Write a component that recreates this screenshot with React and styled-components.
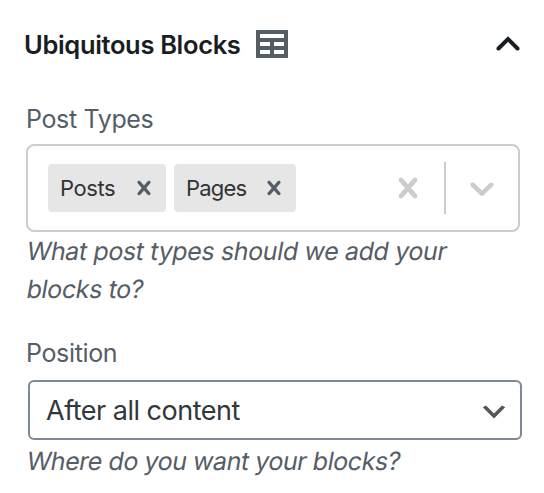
import React from "react";
import styled, { createGlobalStyle } from "styled-components";

const GlobalStyle = createGlobalStyle`
  * { box-sizing: border-box; }
  body {
    margin: 0;
    background: #fff;
    font-family: Inter, "Liberation Sans", sans-serif;
  }
`;

const Panel = styled.section`
  width: 544px;
  height: 493px;
  padding: 26px 22px 0 26px;
  overflow: hidden;
  background: #fff;
`;

const PanelHeader = styled.header`
  display: flex;
  align-items: center;
  height: 36px;
  margin-bottom: 37px;
`;

const Title = styled.h2`
  width: 232px;
  margin: 1px 0 0 -2px;
  color: #191e23;
  font-size: 25.5px;
  font-weight: 600;
  line-height: 36px;
  letter-spacing: -0.34px;
  white-space: nowrap;
`;

const ToggleIcon = styled.svg`
  margin-left: auto;
`;

const Field = styled.div`
  display: flex;
  flex-direction: column;
  margin-bottom: ${(p) => p.$gap || 0}px;
`;

const Label = styled.label`
  height: 40px;
  margin-bottom: ${(p) => p.$gap}px;
  color: #555d66;
  font-size: 25px;
  line-height: 40px;
  letter-spacing: -0.35px;
`;

const Help = styled.p`
  margin: ${(p) => p.$top || 0}px 0 0;
  padding-left: 1px;
  color: #555d66;
  font-size: 25px;
  line-height: 38px;
  letter-spacing: ${(p) => p.$tracking}px;
  white-space: nowrap;
`;

const Slanted = styled.em`
  display: block;
  font-style: normal;
  transform: skewX(-10deg);
`;

const MultiSelect = styled.div`
  display: flex;
  align-items: center;
  width: 494px;
  height: 88px;
  padding: 0 16px 0 20px;
  border: 2px solid #ccc;
  border-radius: 8px;
`;

const Tags = styled.div`
  display: flex;
  flex: 1;
  gap: 8px;
`;

const Tag = styled.span`
  display: flex;
  align-items: center;
  justify-content: space-between;
  width: ${(p) => p.$width}px;
  height: 48px;
  padding: 0 8px 0 12px;
  border-radius: 4px;
  background: #e6e6e6;
  color: #333;
  font-size: 22px;
  letter-spacing: ${(p) => p.$tracking}px;
`;

const Indicators = styled.div`
  display: flex;
  align-items: center;
`;

const Separator = styled.span`
  width: 2px;
  height: 52px;
  margin: 0 16px;
  background: #ccc;
`;

const SelectBox = styled.div`
  display: flex;
  align-items: center;
  justify-content: space-between;
  width: 494px;
  height: 60px;
  margin-left: 2px;
  padding: 0 10px 0 16px;
  border: 2px solid #7e8993;
  border-radius: 6px;
  color: #32373c;
  font-size: 27px;
  letter-spacing: -0.5px;
`;

const SelectArrow = styled.svg`
  margin-top: 4px;
`;

const TableIcon = () => (
  <svg width="32" height="28" viewBox="0 0 32 28" fill="#555d66" fillRule="evenodd">
    <path d="M0 0h32v28H0zM4 4v4h24V4zM4 12v4h10v-4zM18 12v4h10v-4zM4 20v4h10v-4zM18 20v4h10v-4z" />
  </svg>
);

const CrossIcon = ({ size, color }) => (
  <svg width={size} height={size} viewBox="0 0 20 20" fill={color}>
    <path d="M14.348 14.849c-0.469 0.469-1.229 0.469-1.697 0l-2.651-3.030-2.651 3.029c-0.469 0.469-1.229 0.469-1.697 0-0.469-0.469-0.469-1.229 0-1.697l2.758-3.15-2.759-3.152c-0.469-0.469-0.469-1.228 0-1.697s1.228-0.469 1.697 0l2.652 3.031 2.651-3.031c0.469-0.469 1.228-0.469 1.697 0s0.469 1.229 0 1.697l-2.758 3.152 2.758 3.15c0.469 0.469 0.469 1.229 0 1.698z" />
  </svg>
);

const DownIcon = () => (
  <svg width="40" height="40" viewBox="0 0 20 20" fill="#ccc">
    <path d="M4.516 7.548c0.436-0.446 1.043-0.481 1.576 0l3.908 3.747 3.908-3.747c0.533-0.481 1.141-0.446 1.574 0 0.436 0.445 0.408 1.197 0 1.615-0.406 0.418-4.695 4.502-4.695 4.502-0.217 0.223-0.502 0.335-0.787 0.335s-0.57-0.112-0.789-0.335c0 0-4.287-4.084-4.695-4.502s-0.436-1.17 0-1.615z" />
  </svg>
);

const tags = [
  { name: "Posts", width: 118, tracking: -0.4 },
  { name: "Pages", width: 122, tracking: -0.8 },
];

export default function App() {
  return (
    <>
      <GlobalStyle />
      <Panel>
        <PanelHeader>
          <Title>Ubiquitous Blocks</Title>
          <TableIcon />
          <ToggleIcon width="28" height="20" viewBox="0 0 28 20" fill="none">
            <path d="M4.5 14.5L14 5l9.5 9.5" stroke="#191e23" strokeWidth="4" strokeLinecap="round" />
          </ToggleIcon>
        </PanelHeader>
        <Field $gap={25}>
          <Label $gap={5}>Post Types</Label>
          <MultiSelect>
            <Tags>
              {tags.map((tag) => (
                <Tag key={tag.name} $width={tag.width} $tracking={tag.tracking}>
                  {tag.name}
                  <CrossIcon size={28} color="#555d66" />
                </Tag>
              ))}
            </Tags>
            <Indicators>
              <CrossIcon size={40} color="#ccc" />
              <Separator />
              <DownIcon />
            </Indicators>
          </MultiSelect>
          <Help $tracking={-0.37}>
            <Slanted>What post types should we add your</Slanted>
            <Slanted>blocks to?</Slanted>
          </Help>
        </Field>
        <Field>
          <Label $gap={7}>Position</Label>
          <SelectBox>
            After all content
            <SelectArrow width="32" height="32" viewBox="0 0 20 20" fill="#555">
              <path d="M5 6l5 5 5-5 2 1-7 7-7-7 2-1z" />
            </SelectArrow>
          </SelectBox>
          <Help $top={2} $tracking={-0.45}>
            <Slanted>Where do you want your blocks?</Slanted>
          </Help>
        </Field>
      </Panel>
    </>
  );
}
